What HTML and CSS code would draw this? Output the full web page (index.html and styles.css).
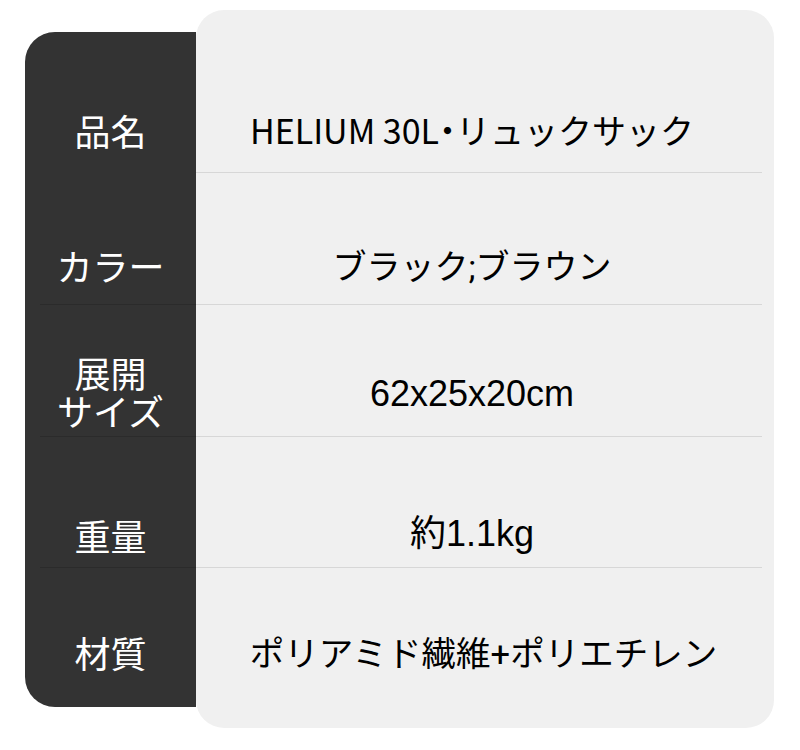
FILE: index.html
```html
<!DOCTYPE html>
<html lang="ja">
<head>
<meta charset="utf-8">
<title>HELIUM 30L スペック</title>
<link rel="stylesheet" href="styles.css">
</head>
<body>
<div class="spec">
  <div class="labels">
    <div class="label-row"><span class="label">品名</span></div>
    <div class="label-row"><span class="label">カラー</span></div>
    <div class="label-row"><span class="label">展開<br>サイズ</span></div>
    <div class="label-row"><span class="label">重量</span></div>
    <div class="label-row"><span class="label">材質</span></div>
  </div>
  <div class="values">
    <div class="value-row"><span class="value value-cjk">HELIUM 30L<span class="dot">・</span>リュックサック</span></div>
    <div class="value-row"><span class="value">ブラック;ブラウン</span></div>
    <div class="value-row"><span class="value value-latin">62x25x20cm</span></div>
    <div class="value-row"><span class="value value-latin">約1.1kg</span></div>
    <div class="value-row"><span class="value value-wide">ポリアミド繊維+ポリエチレン</span></div>
  </div>
</div>
</body>
</html>
```

FILE: styles.css
```css
html, body {
  margin: 0;
  padding: 0;
  background: #ffffff;
}

.spec {
  display: flex;
  align-items: flex-start;
  padding-left: 25px;
}

/* dark label column */
.labels {
  width: 171px;
  margin-top: 32px;
  background: #333333;
  border-radius: 30px 0 0 30px;
  display: flex;
  flex-direction: column;
}

.label-row {
  position: relative;
  display: flex;
  align-items: center;
  justify-content: center;
  box-sizing: border-box;
}

.label-row + .label-row + .label-row::before {
  content: "";
  position: absolute;
  top: 0;
  left: 15px;
  right: 0;
  height: 1px;
  background: #2b2b2b;
}

.label-row:nth-child(1) { height: 140px; padding-top: 56px; }
.label-row:nth-child(2) { height: 132px; padding-top: 54px; }
.label-row:nth-child(3) { height: 132px; padding-top: 42px; }
.label-row:nth-child(4) { height: 131px; padding-top: 66px; }
.label-row:nth-child(5) { height: 140px; padding-top: 30px; }

.label {
  font-family: "Noto Sans CJK JP", "Noto Sans", sans-serif;
  font-size: 36px;
  line-height: 38px;
  color: #ffffff;
  text-align: center;
}

/* light value column */
.values {
  width: 578px;
  margin-top: 10px;
  background: #f0f0f0;
  border-radius: 28px;
  display: flex;
  flex-direction: column;
}

.value-row {
  display: flex;
  align-items: center;
  justify-content: center;
  box-sizing: border-box;
  margin-right: 12px;
  padding-right: 14px;
}

.value-row + .value-row {
  border-top: 1px solid #d7d7d7;
}

.value-row:nth-child(1) { height: 162px; padding-top: 78px; }
.value-row:nth-child(2) { height: 132px; padding-top: 56px; }
.value-row:nth-child(3) { height: 132px; padding-top: 46px; }
.value-row:nth-child(4) { height: 131px; padding-top: 64px; }
.value-row:nth-child(5) { height: 161px; padding-top: 12px; padding-right: 0; padding-left: 9px; }

.value {
  font-family: Roboto, "Noto Sans CJK JP", sans-serif;
  font-size: 34px;
  line-height: 40px;
  color: #000000;
  white-space: nowrap;
}

.value-cjk {
  font-family: "Noto Sans CJK JP", sans-serif;
}

.value-latin {
  font-family: "Liberation Sans", "Noto Sans CJK JP", sans-serif;
  font-size: 36px;
}

.value-wide {
  font-size: 34.5px;
}

.dot {
  font-feature-settings: "halt" 1;
}
```
